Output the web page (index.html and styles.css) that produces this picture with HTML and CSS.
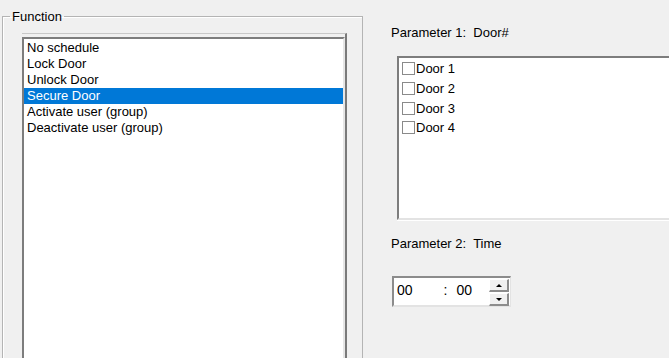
FILE: index.html
```html
<!DOCTYPE html>
<html>

<head>
    <meta charset="utf-8">
    <title>Schedule</title>
    <link rel="stylesheet" href="styles.css">
</head>

<body>
    <div id="dialog">
        <fieldset class="group">
            <legend>Function</legend>
            <div class="list-frame">
                <ul class="list">
                    <li>No schedule</li>
                    <li>Lock Door</li>
                    <li>Unlock Door</li>
                    <li class="selected">Secure Door</li>
                    <li>Activate user (group)</li>
                    <li>Deactivate user (group)</li>
                </ul>
            </div>
        </fieldset>
        <div class="params">
            <div class="param-label">Parameter 1:&nbsp; Door#</div>
            <div class="checklist">
                <label class="check-row"><span class="box"></span>Door 1</label>
                <label class="check-row"><span class="box"></span>Door 2</label>
                <label class="check-row"><span class="box"></span>Door 3</label>
                <label class="check-row"><span class="box"></span>Door 4</label>
            </div>
            <div class="param-label second">Parameter 2:&nbsp; Time</div>
            <div class="time">
                <span class="hh">00</span>
                <span class="sep">:</span>
                <span class="mm">00</span>
                <div class="spin">
                    <div class="spin-btn"><span class="arrow up"></span></div>
                    <div class="spin-btn"><span class="arrow down"></span></div>
                </div>
            </div>
        </div>
    </div>
</body>

</html>
```

FILE: styles.css
```css
body {
    margin: 0;
    padding: 0;
    background: #f0f0f0;
    color: #000;
    font-family: "Liberation Sans", Arial, sans-serif;
    font-size: 13px;
    overflow: hidden;
    height: 358px;
}

#dialog {
    display: flex;
    flex-direction: row;
    height: 358px;
}

/* group box runs off the bottom of the window, so no bottom edge */
.group {
    box-sizing: border-box;
    width: 361px;
    height: 349px;
    margin: 9px 0 0 2px;
    padding: 0;
    border: 1px solid #b4b4b4;
    border-bottom: none;
    box-shadow: inset 1px 1px #fff;
    flex-shrink: 0;
}

.group legend {
    margin-left: 7px;
    padding: 0 2px;
    line-height: 15px;
}

.list-frame {
    width: 325px;
    height: 325px;
    box-sizing: border-box;
    margin: 9px 0 0 19px;
    padding-top: 3px;
    border-top: 1px solid #c8c8c8;
    border-right: 2px solid #7a7a7a;
}

.list {
    list-style: none;
    margin: 0;
    padding: 1px 0 0 0;
    height: 100%;
    box-sizing: border-box;
    background: #fff;
    border-top: 2px solid #7d7d7d;
    border-left: 2px solid #7d7d7d;
    border-right: 2px solid #e6e6e6;
}

.list li {
    height: 16px;
    line-height: 16px;
    padding-left: 3px;
    white-space: nowrap;
}

.list li.selected {
    background: #0078d7;
    color: #fff;
}

.params {
    margin-left: 28px;
    padding-top: 25px;
    flex: 1;
    min-width: 0;
}

.param-label {
    line-height: 15px;
    white-space: nowrap;
}

.param-label.second {
    margin-top: 16px;
}

/* list box is cut by the right edge of the window */
.checklist {
    box-sizing: border-box;
    width: 273px;
    height: 164px;
    margin: 16px 0 0 6px;
    padding-top: 1px;
    background: #fff;
    border-top: 2px solid #7d7d7d;
    border-left: 2px solid #7d7d7d;
    border-bottom: 2px solid #e3e3e3;
    box-shadow: 0 1px #fff;
}

.check-row {
    display: flex;
    align-items: center;
    height: 19.7px;
    padding-left: 3px;
}

.box {
    box-sizing: border-box;
    width: 13px;
    height: 13px;
    border: 1px solid #8a8a8a;
    background: #fff;
    margin-right: 1px;
}

.time {
    box-sizing: border-box;
    display: flex;
    align-items: flex-start;
    width: 119px;
    height: 31px;
    margin: 25px 0 0 1px;
    padding: 5px 0 0 3px;
    background: #fff;
    border-top: 2px solid #8c8c8c;
    border-left: 2px solid #8c8c8c;
    border-bottom: 2px solid #e3e3e3;
    border-right: 1px solid #e3e3e3;
    font-family: "Liberation Sans Narrow", "Liberation Sans", sans-serif;
    font-size: 14px;
    line-height: 14px;
}

.time .sep {
    margin-left: 31px;
}

.time .mm {
    margin-left: 9px;
}

.spin {
    display: flex;
    flex-direction: column;
    gap: 1px;
    margin: -4px 1px 0 auto;
}

.spin-btn {
    box-sizing: border-box;
    width: 20px;
    height: 13px;
    background: #f0f0f0;
    border-top: 1px solid #fff;
    border-left: 1px solid #fff;
    border-right: 2px solid #8c8c8c;
    border-bottom: 2px solid #8c8c8c;
    display: flex;
    align-items: center;
    justify-content: center;
}

.arrow {
    width: 0;
    height: 0;
    border-left: 3px solid transparent;
    border-right: 3px solid transparent;
}

.arrow.up {
    border-bottom: 3px solid #000;
}

.arrow.down {
    border-top: 3px solid #000;
}
```
